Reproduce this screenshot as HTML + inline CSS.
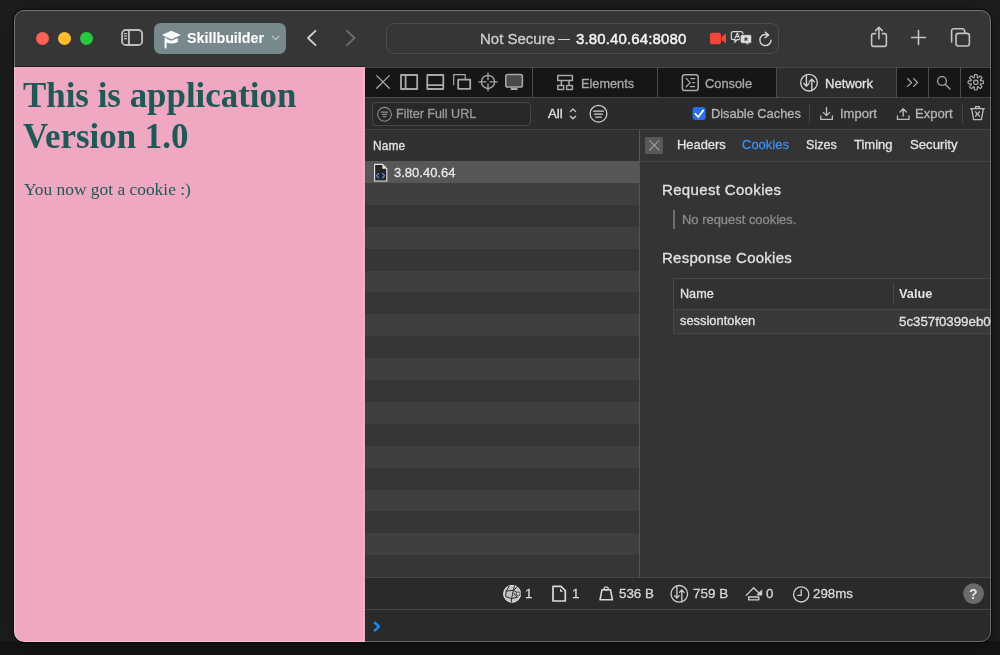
<!DOCTYPE html>
<html><head><meta charset="utf-8">
<style>
*{box-sizing:border-box;margin:0;padding:0}
html,body{width:1000px;height:655px;overflow:hidden;background:#1c1d1f;font-family:"Liberation Sans",sans-serif}
.a{position:absolute}
#win{position:absolute;left:14px;top:10px;width:977px;height:632px;border-radius:10px;overflow:hidden;background:#2b2b2b}
#inner{position:absolute;left:-14px;top:-10px;width:1000px;height:655px}
#winborder{position:absolute;left:14px;top:10px;width:977px;height:632px;border-radius:10px;border:1px solid rgba(255,255,255,0.3);pointer-events:none;box-shadow:0 0 0 1px rgba(0,0,0,0.45),0 3px 18px rgba(0,0,0,0.4)}
.dot{position:absolute;width:13px;height:13px;border-radius:50%;top:32px}
.t{position:absolute;white-space:pre;line-height:1;-webkit-text-stroke:0.3px currentColor;will-change:transform}
svg{position:absolute;overflow:visible}
.ic{fill:none;stroke-linecap:round;stroke-linejoin:round}
</style></head><body>
<div class="a" style="left:0;top:641px;width:1000px;height:14px;background:#141517"></div>
<div id="win"><div id="inner">
  <!-- titlebar -->
  <div class="a" style="left:0;top:0;width:1000px;height:67px;background:#363636"></div>
  <div class="a" style="left:0;top:66px;width:365px;height:1px;background:#1f1f1f"></div>
  <!-- sidebar icon -->
  <svg style="left:0;top:0" width="1" height="1">
    <g class="ic" stroke="#bdbdbd" stroke-width="1.9">
      <rect x="122.1" y="30" width="20" height="15" rx="3.6"/>
      <line x1="128.9" y1="30" x2="128.9" y2="45"/>
    </g>
    <g stroke="#bdbdbd" stroke-width="1.3" stroke-linecap="butt">
      <line x1="124" y1="33.6" x2="127" y2="33.6"/>
      <line x1="124" y1="36.2" x2="127" y2="36.2"/>
      <line x1="124" y1="38.7" x2="127" y2="38.7"/>
    </g>
  </svg>
  <!-- tab group pill -->
  <div class="a" style="left:154px;top:23px;width:132px;height:31px;border-radius:6.5px;background:#78898d"></div>
  <svg style="left:0;top:0" width="1" height="1">
    <path d="M171.3 30.7 L180.8 35 L171.3 39.3 L161.8 35 Z" fill="#fff"/>
    <path d="M165.6 38.2 L171.3 40.8 L177.8 38 L177.8 42 Q171.5 45.2 165.6 42 Z" fill="#fff"/>
    <path d="M165.6 38.6 L165.6 47.4" stroke="#fff" stroke-width="2" stroke-linecap="round"/>
    <path d="M272.2 36.2 L275.6 39.6 L279 36.2" class="ic" stroke="#c3cbcd" stroke-width="1.2"/>
  </svg>
  <div class="t" style="left:187.2px;top:30.6px;font-size:14.3px;font-weight:bold;color:#fff;-webkit-text-stroke:0.1px">Skillbuilder</div>
  <!-- nav arrows -->
  <svg style="left:0;top:0" width="1" height="1">
    <path d="M315.5 30.8 L308 38 L315.5 45.2" class="ic" stroke="#d2d2d2" stroke-width="1.8"/>
    <path d="M347 30.8 L354.5 38 L347 45.2" class="ic" stroke="#6b6b6b" stroke-width="1.8"/>
  </svg>
  <!-- url bar -->
  <div class="a" style="left:386px;top:23px;width:393px;height:31px;border-radius:8px;border:1px solid #4c4c4c;background:#363636"></div>
  <div class="t" style="left:480px;top:30.7px;font-size:15px;color:#cfcfcf">Not Secure</div>
  <div class="a" style="left:558.3px;top:39.1px;width:12px;height:1.3px;background:#d0d0d0"></div>
  <div class="t" style="left:575.8px;top:30.7px;font-size:15px;letter-spacing:0.14px;color:#f4f4f4;-webkit-text-stroke:0.45px #f4f4f4">3.80.40.64:8080</div>
  <svg style="left:0;top:0" width="1" height="1">
    <rect x="710" y="32.7" width="11" height="11.5" rx="2" fill="#f5443a"/>
    <path d="M721.6 36.6 L726 33.6 L726 43.2 L721.6 40.2 Z" fill="#f5443a"/>
    <!-- translate -->
    <path d="M733.2 31.6 h7.8 a1.9 1.9 0 0 1 1.9 1.9 v4.2 a1.9 1.9 0 0 1 -1.9 1.9 h-3.8 l-2.2 2.6 v-2.6 h-1.8 a1.9 1.9 0 0 1 -1.9 -1.9 v-4.2 a1.9 1.9 0 0 1 1.9 -1.9 z" fill="#363636" stroke="#d8d8d8" stroke-width="1.2"/>
    <path d="M734.9 38.4 L737.3 33 L739.7 38.4 M735.8 36.6 H738.8" class="ic" stroke="#d8d8d8" stroke-width="1.1"/>
    <path d="M742.2 34.6 h7.6 a1.9 1.9 0 0 1 1.9 1.9 v5 a1.9 1.9 0 0 1 -1.9 1.9 h-1.4 v2.4 l-2.4 -2.4 h-3.8 a1.9 1.9 0 0 1 -1.9 -1.9 v-5 a1.9 1.9 0 0 1 1.9 -1.9 z" fill="#dcdcdc" stroke="#363636" stroke-width="0.8"/>
    <path d="M745.9 36.6 L746.6 38.3 L748.4 38.4 L747 39.5 L747.5 41.3 L745.9 40.3 L744.3 41.3 L744.8 39.5 L743.4 38.4 L745.2 38.3 Z" fill="#404040"/>
    <!-- reload -->
    <path d="M768.2 35.2 A5.6 5.6 0 1 0 771 40.2" class="ic" stroke="#d8d8d8" stroke-width="1.4"/>
    <path d="M765.4 32.2 L768.6 35 L765.2 37.6" class="ic" stroke="#d8d8d8" stroke-width="1.4"/>
  </svg>
  <!-- right toolbar icons -->
  <svg style="left:0;top:0" width="1" height="1">
    <path d="M875.6 33.6 h-2.2 a1.8 1.8 0 0 0 -1.8 1.8 v9.2 a1.8 1.8 0 0 0 1.8 1.8 h11.2 a1.8 1.8 0 0 0 1.8 -1.8 v-9.2 a1.8 1.8 0 0 0 -1.8 -1.8 h-2.2" class="ic" stroke="#c4c4c4" stroke-width="1.6"/>
    <path d="M878.9 38.8 V27.6 M875.6 30.6 L878.9 27.3 L882.2 30.6" class="ic" stroke="#c4c4c4" stroke-width="1.6"/>
    <path d="M918.5 30.6 V44.4 M911.6 37.5 H925.4" class="ic" stroke="#c4c4c4" stroke-width="1.6"/>
    <path d="M951.6 42 v-11 a2.2 2.2 0 0 1 2.2 -2.2 h8.6 a2.2 2.2 0 0 1 2.2 2.2 v1.6" class="ic" stroke="#c4c4c4" stroke-width="1.6"/>
    <rect x="956" y="33.4" width="13.4" height="12.6" rx="2.4" class="ic" stroke="#c4c4c4" stroke-width="1.6"/>
  </svg>

  <!-- page content -->
  <div class="a" style="left:0;top:67px;width:364.5px;height:600px;background:#f0a7c1"></div>
  <div class="t" style="left:23.2px;top:75.2px;font-family:'Liberation Serif';font-weight:bold;font-size:34.9px;-webkit-text-stroke:0;color:#1f5957;line-height:41.2px">This is application<br>Version 1.0</div>
  <div class="t" style="left:23.5px;top:180.6px;font-family:'Liberation Serif';font-size:17.4px;-webkit-text-stroke:0;color:#1f5957">You now got a cookie :)</div>

  <div class="a" style="left:363px;top:67px;width:1.4px;height:600px;background:rgba(255,255,255,0.18)"></div>
  <!-- devtools -->
  <div class="a" style="left:364.5px;top:67px;width:640px;height:600px;background:#2b2b2b"></div>
  <!-- tab bar -->
  <div class="a" style="left:364.5px;top:67px;width:640px;height:31px;background:#161616"></div>
  <div class="a" style="left:777px;top:67px;width:119px;height:31px;background:#2c2c2c"></div>
  <div class="a" style="left:364.5px;top:67px;width:640px;height:1px;background:#464646"></div>
  <div class="a" style="left:364.5px;top:97px;width:640px;height:1px;background:#484848"></div>
  <div class="a" style="left:532px;top:67px;width:1.1px;height:31px;background:#4e4e4e"></div>
  <div class="a" style="left:657px;top:67px;width:1.1px;height:31px;background:#4e4e4e"></div>
  <div class="a" style="left:776px;top:67px;width:1.1px;height:31px;background:#4e4e4e"></div>
  <div class="a" style="left:896px;top:67px;width:1.1px;height:31px;background:#4e4e4e"></div>
  <div class="a" style="left:928px;top:67px;width:1.1px;height:31px;background:#4e4e4e"></div>
  <div class="a" style="left:959.6px;top:67px;width:1.1px;height:31px;background:#4e4e4e"></div>
  <svg style="left:0;top:0" width="1" height="1">
    <g class="ic" stroke="#a9a9a9" stroke-width="1.3">
      <path d="M376.7 75.6 L389.3 88.3 M389.3 75.6 L376.7 88.3"/>
    </g>
    <g class="ic" stroke="#a9a9a9" stroke-width="1.8" stroke-linecap="butt">
      <rect x="401" y="75" width="16.2" height="14"/>
      <line x1="405.6" y1="75" x2="405.6" y2="89"/>
      <rect x="427.3" y="75" width="16" height="14"/>
      <line x1="427.3" y1="85.2" x2="443.3" y2="85.2"/>
    </g>
    <path d="M453.7 84.8 V74.6 H465.2 V78.6" class="ic" stroke="#a9a9a9" stroke-width="1.2" stroke-linecap="butt"/>
    <rect x="458.2" y="79.6" width="12" height="9.2" class="ic" stroke="#a9a9a9" stroke-width="1.8" stroke-linecap="butt"/>
    <g class="ic" stroke="#a9a9a9" stroke-width="1.3" stroke-linecap="butt">
      <circle cx="488" cy="81.9" r="6.6"/>
      <path d="M488 73 V79.8 M488 84 V90.8 M479 81.9 H485.9 M490.1 81.9 H497"/>
    </g>
    <rect x="505.8" y="74.6" width="16.6" height="12.4" rx="1.8" fill="#4a4a4a" stroke="#a9a9a9" stroke-width="1.5"/>
    <path d="M511 87.8 h6.2 l0.6 2.2 h-7.4 z" fill="#a9a9a9"/>
    <!-- elements icon -->
    <g class="ic" stroke="#a9a9a9" stroke-width="1.5" stroke-linecap="butt">
      <rect x="557.8" y="75.6" width="14.6" height="5"/>
      <rect x="557.8" y="85.4" width="5.8" height="4.2"/>
      <rect x="566.6" y="85.4" width="5.8" height="4.2"/>
      <path d="M561.4 80.6 V85.4 M569 80.6 V85.4"/>
    </g>
    <!-- console icon -->
    <rect x="682.4" y="74.8" width="15.8" height="15.8" rx="2.4" class="ic" stroke="#a9a9a9" stroke-width="1.5"/>
    <g class="ic" stroke="#a9a9a9" stroke-width="1.3">
      <path d="M686.2 78.4 L690.2 82.6 L686.2 86.8"/>
      <path d="M690.9 78.6 H694.7 M692.8 82.6 H694.7 M690.3 86.6 H694.7"/>
    </g>
    <!-- network icon -->
    <g class="ic" stroke="#cfcfcf" stroke-width="1.4">
      <circle cx="809" cy="82.7" r="8.3"/>
      <path d="M806.4 74.6 V86.2 M803.9 83.6 L806.4 86.2 L808.9 83.6" />
      <path d="M811.8 90.8 V79.2 M809.3 81.8 L811.8 79.2 L814.3 81.8" />
    </g>
    <!-- >> search gear -->
    <g class="ic" stroke="#a9a9a9" stroke-width="1.3">
      <path d="M907.6 78.6 L911.5 82.5 L907.6 86.4 M913.6 78.6 L917.5 82.5 L913.6 86.4"/>
      <circle cx="942" cy="81" r="4.4"/>
      <path d="M945.2 84.2 L950 89"/>
    </g>
    <g transform="translate(975.8 82.3)"><path class="ic" stroke="#a9a9a9" stroke-width="1.2" d="M7.70 0.00 L7.70 0.20 L7.69 0.40 L7.67 0.60 L7.64 0.80 L7.60 1.00 L7.50 1.19 L7.30 1.35 L6.87 1.46 L6.18 1.48 L5.47 1.47 L4.99 1.48 L4.73 1.54 L4.59 1.62 L4.50 1.73 L4.44 1.84 L4.40 1.96 L4.39 2.09 L4.43 2.26 L4.57 2.48 L4.90 2.83 L5.42 3.32 L5.89 3.82 L6.12 4.20 L6.15 4.46 L6.08 4.66 L5.97 4.84 L5.85 5.00 L5.72 5.15 L5.59 5.30 L5.44 5.44 L5.30 5.59 L5.15 5.72 L5.00 5.85 L4.84 5.97 L4.66 6.08 L4.46 6.15 L4.20 6.12 L3.82 5.89 L3.32 5.42 L2.83 4.90 L2.48 4.57 L2.26 4.43 L2.09 4.39 L1.96 4.40 L1.84 4.44 L1.73 4.50 L1.62 4.59 L1.54 4.73 L1.48 4.99 L1.47 5.47 L1.48 6.18 L1.46 6.87 L1.35 7.30 L1.19 7.50 L1.00 7.60 L0.80 7.64 L0.60 7.67 L0.40 7.69 L0.20 7.70 L0.00 7.70 L-0.20 7.70 L-0.40 7.69 L-0.60 7.67 L-0.80 7.64 L-1.00 7.60 L-1.19 7.50 L-1.35 7.30 L-1.46 6.87 L-1.48 6.18 L-1.47 5.47 L-1.48 4.99 L-1.54 4.73 L-1.62 4.59 L-1.73 4.50 L-1.84 4.44 L-1.96 4.40 L-2.09 4.39 L-2.26 4.43 L-2.48 4.57 L-2.83 4.90 L-3.32 5.42 L-3.82 5.89 L-4.20 6.12 L-4.46 6.15 L-4.66 6.08 L-4.84 5.97 L-5.00 5.85 L-5.15 5.72 L-5.30 5.59 L-5.44 5.44 L-5.59 5.30 L-5.72 5.15 L-5.85 5.00 L-5.97 4.84 L-6.08 4.66 L-6.15 4.46 L-6.12 4.20 L-5.89 3.82 L-5.42 3.32 L-4.90 2.83 L-4.57 2.48 L-4.43 2.26 L-4.39 2.09 L-4.40 1.96 L-4.44 1.84 L-4.50 1.73 L-4.59 1.62 L-4.73 1.54 L-4.99 1.48 L-5.47 1.47 L-6.18 1.48 L-6.87 1.46 L-7.30 1.35 L-7.50 1.19 L-7.60 1.00 L-7.64 0.80 L-7.67 0.60 L-7.69 0.40 L-7.70 0.20 L-7.70 0.00 L-7.70 -0.20 L-7.69 -0.40 L-7.67 -0.60 L-7.64 -0.80 L-7.60 -1.00 L-7.50 -1.19 L-7.30 -1.35 L-6.87 -1.46 L-6.18 -1.48 L-5.47 -1.47 L-4.99 -1.48 L-4.73 -1.54 L-4.59 -1.62 L-4.50 -1.73 L-4.44 -1.84 L-4.40 -1.96 L-4.39 -2.09 L-4.43 -2.26 L-4.57 -2.48 L-4.90 -2.83 L-5.42 -3.32 L-5.89 -3.82 L-6.12 -4.20 L-6.15 -4.46 L-6.08 -4.66 L-5.97 -4.84 L-5.85 -5.00 L-5.72 -5.15 L-5.59 -5.30 L-5.44 -5.44 L-5.30 -5.59 L-5.15 -5.72 L-5.00 -5.85 L-4.84 -5.97 L-4.66 -6.08 L-4.46 -6.15 L-4.20 -6.12 L-3.82 -5.89 L-3.32 -5.42 L-2.83 -4.90 L-2.48 -4.57 L-2.26 -4.43 L-2.09 -4.39 L-1.96 -4.40 L-1.84 -4.44 L-1.73 -4.50 L-1.62 -4.59 L-1.54 -4.73 L-1.48 -4.99 L-1.47 -5.47 L-1.48 -6.18 L-1.46 -6.87 L-1.35 -7.30 L-1.19 -7.50 L-1.00 -7.60 L-0.80 -7.64 L-0.60 -7.67 L-0.40 -7.69 L-0.20 -7.70 L-0.00 -7.70 L0.20 -7.70 L0.40 -7.69 L0.60 -7.67 L0.80 -7.64 L1.00 -7.60 L1.19 -7.50 L1.35 -7.30 L1.46 -6.87 L1.48 -6.18 L1.47 -5.47 L1.48 -4.99 L1.54 -4.73 L1.62 -4.59 L1.73 -4.50 L1.84 -4.44 L1.96 -4.40 L2.09 -4.39 L2.26 -4.43 L2.48 -4.57 L2.83 -4.90 L3.32 -5.42 L3.82 -5.89 L4.20 -6.12 L4.46 -6.15 L4.66 -6.08 L4.84 -5.97 L5.00 -5.85 L5.15 -5.72 L5.30 -5.59 L5.44 -5.44 L5.59 -5.30 L5.72 -5.15 L5.85 -5.00 L5.97 -4.84 L6.08 -4.66 L6.15 -4.46 L6.12 -4.20 L5.89 -3.82 L5.42 -3.32 L4.90 -2.83 L4.57 -2.48 L4.43 -2.26 L4.39 -2.09 L4.40 -1.96 L4.44 -1.84 L4.50 -1.73 L4.59 -1.62 L4.73 -1.54 L4.99 -1.48 L5.47 -1.47 L6.18 -1.48 L6.87 -1.46 L7.30 -1.35 L7.50 -1.19 L7.60 -1.00 L7.64 -0.80 L7.67 -0.60 L7.69 -0.40 L7.70 -0.20 Z"/><circle r="2.2" class="ic" stroke="#a9a9a9" stroke-width="1.2"/>
    </g>
  </svg>
  <div class="t" style="left:580.6px;top:77.5px;font-size:12.74px;color:#a9a9a9">Elements</div>
  <div class="t" style="left:705.4px;top:77.5px;font-size:12.84px;color:#a9a9a9">Console</div>
  <div class="t" style="left:824.6px;top:77.3px;font-size:13.1px;color:#e2e2e2">Network</div>

  <!-- filter bar -->
  <div class="a" style="left:364.5px;top:129px;width:640px;height:1px;background:#444"></div>
  <div class="a" style="left:372px;top:102.3px;width:158.5px;height:23.6px;border-radius:4px;border:1px solid #474747;background:#282828"></div>
  <svg style="left:0;top:0" width="1" height="1">
    <circle cx="384.5" cy="114.3" r="6.9" class="ic" stroke="#8c8c8c" stroke-width="1.1"/>
    <path d="M381.2 112.1 H387.8 M382.2 114.4 H386.8 M383.2 116.6 H385.8" class="ic" stroke="#8c8c8c" stroke-width="1.1"/>
    <path d="M570.3 111.6 L573 109 L575.7 111.6 M570.3 116.2 L573 118.8 L575.7 116.2" class="ic" stroke="#d5d5d5" stroke-width="1.2"/>
    <circle cx="598.5" cy="113.7" r="8.4" class="ic" stroke="#cdcdcd" stroke-width="1.3"/>
    <path d="M593.6 111.2 H603.4 M594.6 114.2 H602.4 M595.8 117.2 H601.2" class="ic" stroke="#cdcdcd" stroke-width="1.3"/>
    <rect x="692.5" y="107" width="13.2" height="13" rx="3" fill="#2a6fe8"/>
    <path d="M695.4 113.8 L698.3 117 L703.2 110.4" class="ic" stroke="#fff" stroke-width="1.8"/>
    <g class="ic" stroke="#bdbdbd" stroke-width="1.3">
      <path d="M820.8 115.8 V119.4 H832.4 V115.8"/>
      <path d="M826.5 107.4 V115.6 M823.3 112.4 L826.5 115.6 L829.7 112.4"/>
      <path d="M897.4 115.8 V119.4 H909 V115.8"/>
      <path d="M903.2 116 V108.8 M900 112 L903.2 108.8 L906.4 112"/>
      <path d="M970.6 108.6 H984.4 M975.6 108.6 V106.6 H979.4 V108.6 M971.6 108.6 L973.6 119.6 H981.4 L983.4 108.6 M975.6 111.8 L979.4 116.2 M979.4 111.8 L975.6 116.2"/>
    </g>
  </svg>
  <div class="a" style="left:809.2px;top:104px;width:1px;height:18.5px;background:#464646"></div>
  <div class="a" style="left:962.2px;top:104px;width:1px;height:18.5px;background:#464646"></div>
  <div class="t" style="left:396.2px;top:108.4px;font-size:12.56px;color:#9a9a9a">Filter Full URL</div>
  <div class="t" style="left:548.2px;top:106.9px;font-size:13.2px;color:#e2e2e2">All</div>
  <div class="t" style="left:711.2px;top:107.6px;font-size:12.84px;color:#b4b4b4">Disable Caches</div>
  <div class="t" style="left:839.6px;top:106.9px;font-size:13px;color:#b4b4b4">Import</div>
  <div class="t" style="left:915.3px;top:106.9px;font-size:13.07px;color:#b4b4b4">Export</div>

  <!-- network list -->
  <div class="a" style="left:364.5px;top:130px;width:275px;height:31px;background:#313131"></div>
  <div class="a" style="left:364.5px;top:161px;width:275px;height:21.7px;background:#575757"></div>
  <div class="a" style="left:364.5px;top:182.7px;width:275px;height:394.3px;background:repeating-linear-gradient(to bottom,#3f3f3f 0,#3f3f3f 21.9px,#363636 21.9px,#363636 43.8px)"></div>
  <div class="a" style="left:639px;top:130px;width:1px;height:447px;background:#555"></div>
  <div class="t" style="left:372.6px;top:141.1px;font-size:11.9px;letter-spacing:0.15px;color:#e2e2e2">Name</div>
  <svg style="left:0;top:0" width="1" height="1">
    <path d="M374.6 164.4 H382.6 L386.8 168.6 V181 H374.6 Z" fill="#242424" stroke="#e8e8e8" stroke-width="1.1" stroke-linejoin="round"/>
    <path d="M382.4 164.6 V168.8 H386.6 Z" fill="#e8e8e8"/>
    <path d="M378.6 173.4 L376.6 175.6 L378.6 177.8 M382.6 173.4 L384.6 175.6 L382.6 177.8" class="ic" stroke="#5b8cf6" stroke-width="1.2"/>
  </svg>
  <div class="t" style="left:393.8px;top:166.4px;font-size:13px;color:#e8e8e8">3.80.40.64</div>

  <!-- details pane -->
  <div class="a" style="left:640px;top:130px;width:360px;height:447px;background:#343434"></div>
  <div class="a" style="left:640px;top:160.5px;width:360px;height:1px;background:#444"></div>
  <div class="a" style="left:645.2px;top:137px;width:18px;height:17.2px;background:#585858;border-radius:1.5px"></div>
  <svg style="left:0;top:0" width="1" height="1">
    <path d="M649.6 140.5 L659.1 150.2 M659.1 140.5 L649.6 150.2" class="ic" stroke="#a8a8a8" stroke-width="1.05"/>
  </svg>
  <div class="t" style="left:677.4px;top:138.5px;font-size:12.9px;color:#e2e2e2">Headers</div>
  <div class="t" style="left:741.8px;top:138.2px;font-size:13px;color:#3a8ef6">Cookies</div>
  <div class="t" style="left:805.6px;top:138.6px;font-size:12.6px;color:#e2e2e2">Sizes</div>
  <div class="t" style="left:854.4px;top:138.2px;font-size:13px;color:#e2e2e2">Timing</div>
  <div class="t" style="left:909.6px;top:138.2px;font-size:13.18px;color:#e2e2e2">Security</div>

  <div class="t" style="left:662px;top:182.3px;font-size:15px;letter-spacing:0.34px;color:#e2e2e2">Request Cookies</div>
  <div class="a" style="left:673px;top:210px;width:2px;height:19px;background:#6e6e6e"></div>
  <div class="t" style="left:682.4px;top:214.1px;font-size:12.95px;color:#8c8c8c">No request cookies.</div>
  <div class="t" style="left:661.9px;top:250px;font-size:15px;letter-spacing:0.26px;color:#e2e2e2">Response Cookies</div>
  <!-- table -->
  <div class="a" style="left:672.8px;top:277.6px;width:340px;height:56px;border:1px solid #474747;background:#323232"></div>
  <div class="a" style="left:673.8px;top:309px;width:340px;height:23.6px;background:#393939;border-top:1px solid #474747"></div>
  <div class="a" style="left:892.6px;top:283px;width:1px;height:21px;background:#484848"></div>
  <div class="t" style="left:680.2px;top:288.4px;font-size:12.63px;color:#e2e2e2">Name</div>
  <div class="t" style="left:899.2px;top:288.4px;font-size:12.78px;font-weight:bold;color:#e2e2e2;-webkit-text-stroke:0">Value</div>
  <div class="t" style="left:680.2px;top:315.4px;font-size:12.9px;color:#e2e2e2">sessiontoken</div>
  <div class="t" style="left:899.4px;top:315.2px;font-size:13.3px;color:#e2e2e2">5c357f0399eb0399</div>

  <!-- status bar -->
  <div class="a" style="left:364.5px;top:577px;width:640px;height:1px;background:#444"></div>
  <div class="a" style="left:364.5px;top:578px;width:640px;height:31px;background:#2a2a2a"></div>
  <div class="a" style="left:364.5px;top:609px;width:640px;height:1px;background:#444"></div>
  <div class="a" style="left:364.5px;top:610px;width:640px;height:40px;background:#2a2a2a"></div>
  <svg style="left:0;top:0" width="1" height="1">
    <circle cx="512.1" cy="593.8" r="8.9" fill="#c4c4c4"/>
    <circle cx="512.1" cy="593.8" r="8.4" fill="none" stroke="#dedede" stroke-width="1"/>
    <g class="ic" stroke="#2e2e2e" stroke-width="1">
      <path d="M509.2 586.2 L506.2 591.2 L513.4 590.2 L514.4 585.8 M513.4 590.2 L516.8 587.4 M506.2 591.2 L505.6 596.6 L511.6 598.6 L517 597.2 M513.4 590.2 L511.6 598.6 L511.2 602.2 M513.4 590.2 L516.6 592.4 M513.9 593.4 L517 597.2"/>
    </g>
    <circle cx="518.2" cy="593.8" r="2" fill="#c8c8c8" stroke="#2e2e2e" stroke-width="0.8"/>
    <path d="M553 586.4 H561 L565.3 590.7 V601 H553 Z" class="ic" stroke="#dadada" stroke-width="1.7" stroke-linejoin="miter"/>
    <path d="M560 588.6 L563 591.8 H560 Z" fill="#dadada"/>
    <path d="M602 589.8 H610.5 L612.4 599.8 H600 Z" class="ic" stroke="#dadada" stroke-width="1.6" stroke-linejoin="miter"/>
    <rect x="604.2" y="587.2" width="4" height="2.8" rx="1.2" fill="none" stroke="#dadada" stroke-width="1.3"/>
    <g class="ic" stroke="#cfcfcf" stroke-width="1.3">
      <circle cx="679.3" cy="593.8" r="8.3"/>
      <path d="M676.9 586 V598 M674.6 595.6 L676.9 598 L679.2 595.6"/>
      <path d="M681.8 601.6 V590 M679.5 592.4 L681.8 590 L684.1 592.4"/>
    </g>
    <g class="ic" stroke="#cfcfcf" stroke-width="1.3">
      <path d="M746.2 595.4 L753.7 587.8 L759.2 593.2"/>
      <rect x="748.6" y="597" width="10.2" height="2.8" />
      <circle cx="801.2" cy="594.4" r="7.6"/>
      <path d="M801.2 589.8 V595.4 H797.8"/>
    </g>
    <path d="M756.8 595 L761.9 589.8 L761.9 595.2 Z" fill="#cfcfcf" stroke="#cfcfcf" stroke-width="0.6" stroke-linejoin="round"/>
    <circle cx="973.6" cy="593.6" r="10.4" fill="#6b6b6b"/>
    <path d="M374.9 622.8 L379 626.6 L374.9 630.4" class="ic" stroke="#1a84ff" stroke-width="2.6"/>
  </svg>
  <div class="t" style="left:969.4px;top:586.6px;font-size:14px;font-weight:bold;color:#e6e6e6;-webkit-text-stroke:0">?</div>
  <div class="t" style="left:525.4px;top:586.8px;font-size:13.3px;color:#d8d8d8">1</div>
  <div class="t" style="left:572.2px;top:586.8px;font-size:13.3px;color:#d8d8d8">1</div>
  <div class="t" style="left:618.8px;top:586.8px;font-size:13.36px;color:#d8d8d8">536 B</div>
  <div class="t" style="left:692.6px;top:586.8px;font-size:13.44px;color:#d8d8d8">759 B</div>
  <div class="t" style="left:766.2px;top:586.8px;font-size:13.3px;color:#d8d8d8">0</div>
  <div class="t" style="left:813px;top:586.8px;font-size:13.33px;color:#d8d8d8">298ms</div>
</div></div>

<!-- traffic lights -->
<div class="dot" style="left:36px;background:#fe5f57"></div>
<div class="dot" style="left:58px;background:#febc2e"></div>
<div class="dot" style="left:80px;background:#28c840"></div>

<div id="winborder"></div>
</body></html>
